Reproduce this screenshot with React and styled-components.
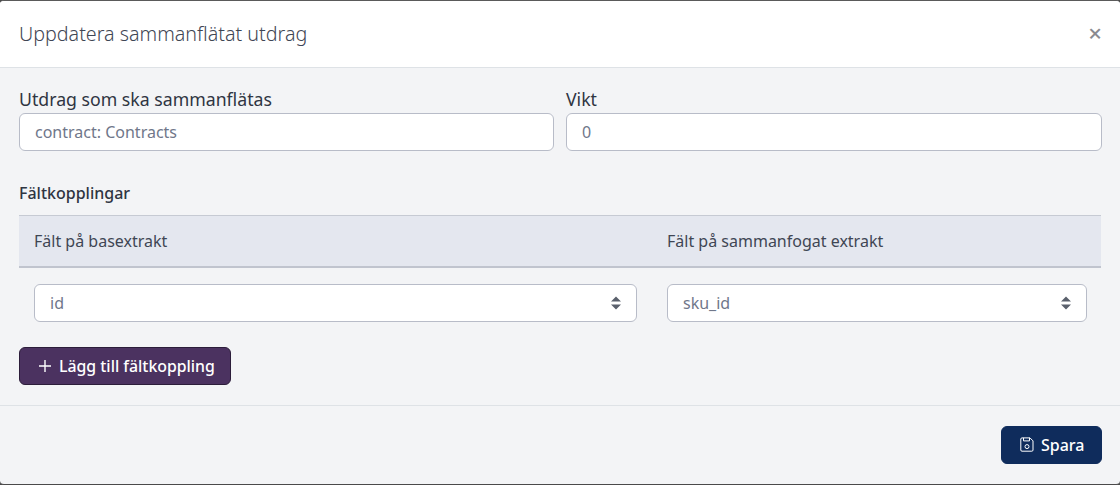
import React from "react";
import styled, { createGlobalStyle } from "styled-components";

const Global = createGlobalStyle`
  html, body { margin: 0; padding: 0; background: #4a4a4a; }
  body { font-family: "Noto Sans", "Open Sans", sans-serif; }
  * { box-sizing: border-box; }
`;
const Modal = styled.div`
  width: 1120px; height: 485px; background: #f3f4f6; border-radius: 4px; overflow: hidden;
  display: flex; flex-direction: column; color: #2f3542; border-top: 1px solid #5a5a5a; border-bottom: 1px solid #4a4a4a;
`;
const Header = styled.div`
  height: 67px; background: #fff; border-bottom: 1px solid #dee2e6; display: flex; align-items: center;
  justify-content: space-between; padding: 0 19px;
`;
const Title = styled.h5`margin: 0 0 1px; font-size: 19.7px; font-weight: 300; color: #3f4654;`;
const Close = styled.span`font-size: 24px; font-weight: 500; color: #8a8a90; line-height: 1; margin: 0 -1px 2px 0;`;
const Body = styled.div`padding: 20px 19px 0; flex: 1;`;
const Fields = styled.div`display: grid; grid-template-columns: 535px 536px; gap: 12px;`;
const Label = styled.label`display: block; font-size: 17.7px; line-height: 22px; margin-bottom: 3px; color: #2f3542;`;
const Box = styled.div`
  height: 38px; background: #fff; border: 1px solid #b8bcc8; border-radius: 6px; display: flex; align-items: center;
  justify-content: space-between; padding: 0 15px; font-size: 16px; color: #70778a;
`;
const Sub = styled.div`font-size: 16px; font-weight: 500; margin-top: 31px; line-height: 22px; color: #2f3542;`;
const Table = styled.div`margin-top: 11px;`;
const Head = styled.div`
  height: 53px; background: #e4e7ef; border-top: 1px solid #c6cad3; border-bottom: 2px solid #c0c4ce;
  display: grid; grid-template-columns: 633px 1fr; align-items: center; padding-left: 15px; font-size: 16px; color: #3f4654;
`;
const Row = styled.div`display: grid; grid-template-columns: 603px 420px; gap: 30px; padding: 16px 15px 0;`;
const Add = styled.button`
  margin-top: 25px; height: 38px; width: 212px; display: flex; align-items: center; justify-content: flex-start; gap: 7px; padding: 0 0 0 18px;
  background: #4b3260; color: #fff; border: 1px solid #2c1d3a; border-radius: 6px; font: 500 15.85px "Noto Sans", sans-serif;
`;
const Footer = styled.div`
  height: 79px; border-top: 1px solid #dee2e6; display: flex; justify-content: flex-end; align-items: flex-start; padding: 20px 18px 0;
`;
const Save = styled.button`
  height: 38px; width: 101px; display: flex; align-items: center; justify-content: flex-start; gap: 7px; padding: 0 0 1px 18px;
  background: #0f2c5c; color: #fff; border: 1px solid #0f2c5c; border-radius: 6px; font: 500 16px "Noto Sans", sans-serif;
`;
const Sort = () => (
  <svg width="10" height="14" viewBox="0 0 10 14"><path d="M5 0.5 10 5.5H0ZM5 13.5 0 8.5H10Z" fill="#5a606c"/></svg>
);
export default function App() {
  return (
    <Modal>
      <Global />
      <Header><Title>Uppdatera sammanflätat utdrag</Title><Close>×</Close></Header>
      <Body>
        <Fields>
          <div><Label>Utdrag som ska sammanflätas</Label><Box>contract: Contracts</Box></div>
          <div><Label>Vikt</Label><Box>0</Box></div>
        </Fields>
        <Sub>Fältkopplingar</Sub>
        <Table>
          <Head><span>Fält på basextrakt</span><span>Fält på sammanfogat extrakt</span></Head>
          <Row><Box>id<Sort /></Box><Box>sku_id<Sort /></Box></Row>
        </Table>
        <Add><svg width="14" height="14" viewBox="0 0 14 14"><path d="M7 1v12M1 7h12" stroke="#fff" strokeWidth="1.4"/></svg>Lägg till fältkoppling</Add>
      </Body>
      <Footer>
        <Save><svg width="14" height="15" viewBox="0 0 14 15" fill="none" stroke="#fff" strokeWidth="1"><path d="M2 .9h8l3 3V13a1.2 1.2 0 0 1-1.2 1.2H2A1.2 1.2 0 0 1 .8 13V2A1.2 1.2 0 0 1 2 .9z"/><circle cx="7" cy="9.6" r="2"/><path d="M3.5 .9v3h6v-3"/></svg>Spara</Save>
      </Footer>
    </Modal>
  );
}
